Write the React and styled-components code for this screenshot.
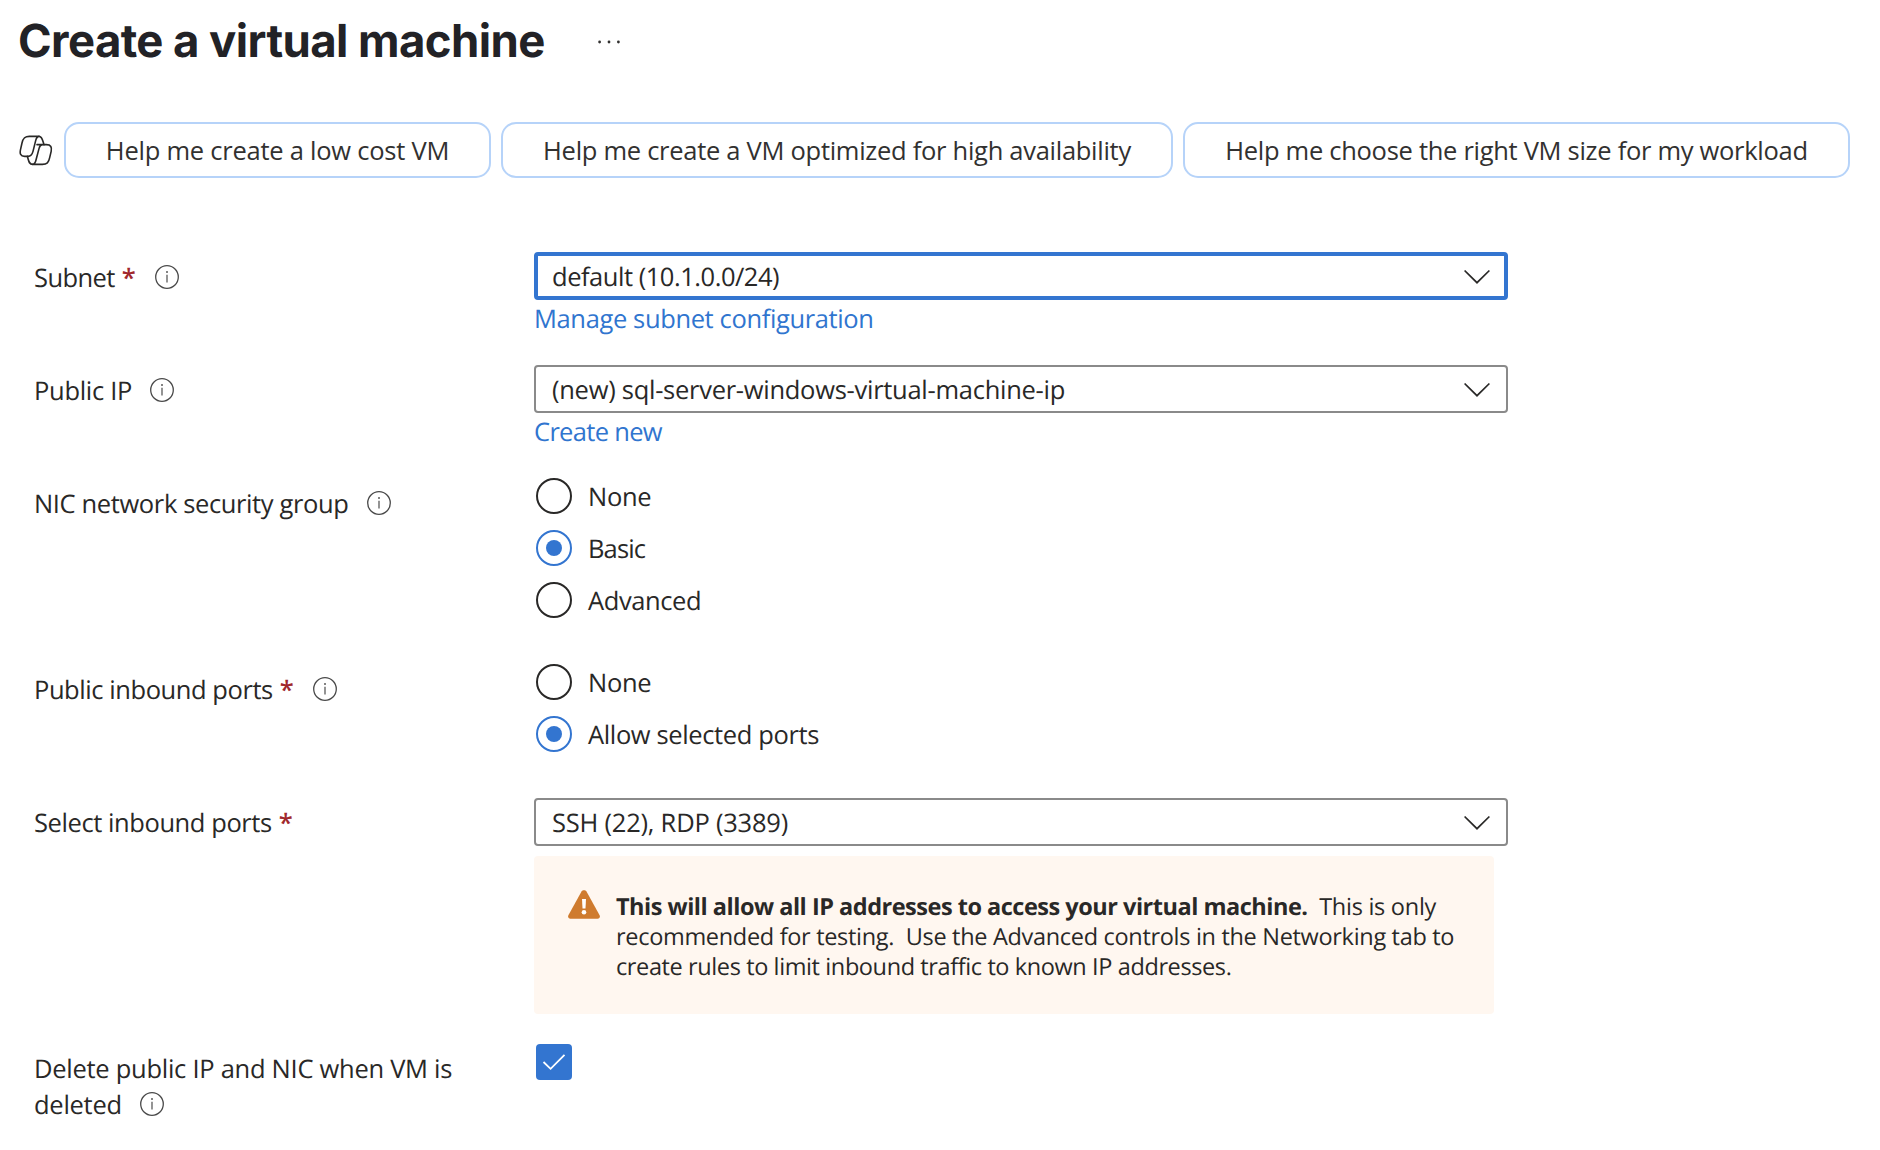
import React from 'react';
import styled, { createGlobalStyle } from 'styled-components';

const GlobalStyle = createGlobalStyle`
  *, *::before, *::after { box-sizing: border-box; }
  body {
    margin: 0;
    background: #fff;
    color: #292827;
    font-family: "Open Sans", "Noto Sans", sans-serif;
    font-size: 25.5px;
    line-height: 36px;
    text-rendering: geometricPrecision;
  }
`;

const Page = styled.main`
  width: 1880px;
  min-height: 1150px;
  padding-top: 10px;
  background: #fff;
`;

const Header = styled.header`
  display: flex;
  align-items: center;
  height: 62px;
  padding-left: 18px;
`;

const Title = styled.h1`
  margin: 0;
  width: 580px;
  font-family: Inter, sans-serif;
  font-size: 45.5px;
  font-weight: 700;
  line-height: 60px;
  letter-spacing: -0.58px;
  white-space: nowrap;
  color: #222226;
`;

const MoreButton = styled.button`
  display: flex;
  padding: 2px 0 0;
  border: 0;
  background: none;
`;

const Suggestions = styled.div`
  display: flex;
  align-items: center;
  height: 56px;
  margin-top: 50px;
  padding-left: 19px;
`;

const CopilotSvg = styled.svg`
  flex: none;
  margin-right: 11px;
`;

const ChipList = styled.div`
  display: flex;
  gap: 10px;
`;

const Chip = styled.button`
  width: ${(p) => p.$width}px;
  height: 56px;
  padding: 0;
  border: 2px solid #b6d3f9;
  border-radius: 15px;
  background: #fff;
  color: #323130;
  font: inherit;
  letter-spacing: ${(p) => p.$track}px;
  white-space: nowrap;
`;

const Form = styled.form`
  display: flex;
  flex-direction: column;
  margin-top: 74px;
  padding-left: 34px;
`;

const Row = styled.div`
  display: grid;
  grid-template-columns: 500px 974px;
  align-items: start;
  margin-bottom: ${(p) => p.$after}px;
`;

const Label = styled.div`
  width: 440px;
  padding-top: ${(p) => p.$top ?? 8}px;
`;

const Text = styled.span`
  letter-spacing: ${(p) => p.$track}px;
  white-space: ${(p) => (p.$wrap ? 'normal' : 'nowrap')};
`;

const Required = styled.span`
  margin: 0 1px 0 7px;
  color: #a0282c;
  font-weight: 600;
`;

const InfoSvg = styled.svg`
  margin-left: 18px;
  vertical-align: -2px;
`;

const Field = styled.div`
  display: flex;
  flex-direction: column;
  align-items: flex-start;
`;

const Select = styled.div`
  display: flex;
  align-items: center;
  justify-content: space-between;
  width: 974px;
  height: 48px;
  padding: 0 ${(p) => (p.$focused ? 14 : 16)}px;
  border: ${(p) => (p.$focused ? '4px solid #3375d0' : '2px solid #8a8a8a')};
  border-radius: 4px;
  background: #fff;

  > span { padding-top: 2px; }
`;

const Link = styled.a`
  padding-top: 1px;
  margin-bottom: -1px;
  color: #3075cf;
  letter-spacing: ${(p) => p.$track}px;
`;

const RadioGroup = styled.div`
  display: flex;
  flex-direction: column;
  gap: 16px;
  padding-left: 2px;
`;

const RadioOption = styled.label`
  display: flex;
  align-items: center;
  gap: 16px;
  height: 36px;

  > span:last-child { padding-top: 2px; }
`;

const RadioCircle = styled.span`
  display: flex;
  align-items: center;
  justify-content: center;
  width: 36px;
  height: 36px;
  border: 2px solid ${(p) => (p.$checked ? '#3375d0' : '#292827')};
  border-radius: 50%;

  &::after {
    content: "";
    width: 16px;
    height: 16px;
    border-radius: 50%;
    background: ${(p) => (p.$checked ? '#3375d0' : 'transparent')};
  }
`;

const Warning = styled.div`
  display: flex;
  gap: 16px;
  width: 960px;
  height: 158px;
  margin-top: 10px;
  padding: 34px 24px 0 34px;
  border-radius: 4px;
  background: #fff7f0;
`;

const WarningText = styled.p`
  margin: 1px 0 0;
  font-size: 23.5px;
  line-height: 30px;
  white-space: nowrap;
`;

const WarningLine = styled.span`
  display: block;
  letter-spacing: ${(p) => p.$track}px;
`;

const Strong = styled.strong`
  font-weight: 700;
  letter-spacing: -0.49px;
`;

const Checkbox = styled.span`
  display: flex;
  width: 36px;
  height: 36px;
  margin-left: 2px;
  border-radius: 4px;
  background: #3375d0;
`;

const CopilotIcon = () => (
  <CopilotSvg width="34" height="31" viewBox="28 43 102 93" fill="none" stroke="#292827" strokeWidth="4.8" strokeLinejoin="round" strokeLinecap="round">
    <path d="M59 47H88C82 47 80 52 78 60L70 92C67 103 64 107 55 107H45C32 107 30 98 32.5 87L37 67C40 53 45 47 59 47Z" />
    <path d="M88 47C98 47 99 60 103 72" />
    <path d="M82 72H110C124 72 127 80 124.5 92L120 111C117 126 112 131 98 131H69C75 131 77 126 79 118L88 84C90 76 93 72 100 72" />
    <path d="M53 107C57 119 57 131 69 131" />
  </CopilotSvg>
);

const Info = () => (
  <InfoSvg width="24" height="24" viewBox="0 0 24 24" fill="none">
    <circle cx="12" cy="12" r="11.3" stroke="#4a4a4a" strokeWidth="1.3" />
    <path d="M12 9.8V17.6" stroke="#5a5a5a" strokeWidth="1.3" />
    <circle cx="12" cy="7" r="1" fill="#5a5a5a" />
  </InfoSvg>
);

const Chevron = () => (
  <svg width="26" height="15" viewBox="0 0 26 15" fill="none">
    <path d="M0.6 1.5L13 13.7L25.4 1.5" stroke="#292827" strokeWidth="1.7" />
  </svg>
);

const WarningIcon = () => (
  <svg width="32" height="29" viewBox="0 0 32 29">
    <path
      d="M13.5 1.5C14.5 -0.3 17.5 -0.3 18.5 1.5L31.6 25.3C32.5 27 31.5 28.7 29.6 28.7H2.4C0.5 28.7 -0.5 27 0.4 25.3Z"
      fill="#cf7b2e"
    />
    <path d="M14 9H18L17.5 18.5H14.5Z" fill="#fff" />
    <circle cx="16" cy="22.2" r="2.3" fill="#fff" />
  </svg>
);

const Dropdown = ({ children, track, focused }) => (
  <Select $focused={focused}>
    <Text $track={track}>{children}</Text>
    <Chevron />
  </Select>
);

const Radios = ({ options }) => (
  <RadioGroup>
    {options.map(([name, track, checked]) => (
      <RadioOption key={name}>
        <RadioCircle $checked={checked} />
        <Text $track={track}>{name}</Text>
      </RadioOption>
    ))}
  </RadioGroup>
);

export default function App() {
  return (
    <Page>
      <GlobalStyle />
      <Header>
        <Title>Create a virtual machine</Title>
        <MoreButton type="button" aria-label="More">
          <svg width="22" height="4" viewBox="0 0 22 4" fill="#323130">
            <circle cx="1.6" cy="2" r="1.4" />
            <circle cx="11" cy="2" r="1.4" />
            <circle cx="20.4" cy="2" r="1.4" />
          </svg>
        </MoreButton>
      </Header>

      <Suggestions>
        <CopilotIcon />
        <ChipList>
          <Chip $width={427} $track={-0.24}>Help me create a low cost VM</Chip>
          <Chip $width={672} $track={-0.28}>Help me create a VM optimized for high availability</Chip>
          <Chip $width={667} $track={-0.29}>Help me choose the right VM size for my workload</Chip>
        </ChipList>
      </Suggestions>

      <Form>
        <Row $after={29}>
          <Label>
            <Text $track={-0.6}>Subnet</Text>
            <Required>*</Required>
            <Info />
          </Label>
          <Field>
            <Dropdown focused track={-0.47}>default (10.1.0.0/24)</Dropdown>
            <Link $track={-0.37}>Manage subnet configuration</Link>
          </Field>
        </Row>

        <Row $after={29}>
          <Label>
            <Text $track={-0.3}>Public IP</Text>
            <Info />
          </Label>
          <Field>
            <Dropdown track={-0.27}>(new) sql-server-windows-virtual-machine-ip</Dropdown>
            <Link $track={-0.68}>Create new</Link>
          </Field>
        </Row>

        <Row $after={46}>
          <Label>
            <Text $track={-0.37}>NIC network security group</Text>
            <Info />
          </Label>
          <Radios options={[['None', -0.3, false], ['Basic', -0.85, true], ['Advanced', -0.4, false]]} />
        </Row>

        <Row $after={46}>
          <Label>
            <Text $track={-0.43}>Public inbound ports</Text>
            <Required>*</Required>
            <Info />
          </Label>
          <Radios options={[['None', -0.3, false], ['Allow selected ports', -0.37, true]]} />
        </Row>

        <Row $after={30}>
          <Label $top={7}>
            <Text $track={-0.42}>Select inbound ports</Text>
            <Required>*</Required>
          </Label>
          <Field>
            <Dropdown track={-0.22}>SSH (22), RDP (3389)</Dropdown>
            <Warning>
              <WarningIcon />
              <WarningText>
                <WarningLine $track={-0.27}>
                  <Strong>This will allow all IP addresses to access your virtual machine.</Strong>
                  {'\u00a0 This is only'}
                </WarningLine>
                <WarningLine $track={-0.31}>
                  {'recommended for testing.\u00a0 Use the Advanced controls in the Networking tab to'}
                </WarningLine>
                <WarningLine $track={-0.39}>
                  create rules to limit inbound traffic to known IP addresses.
                </WarningLine>
              </WarningText>
            </Warning>
          </Field>
        </Row>

        <Row $after={0}>
          <Label $top={7}>
            <Text $wrap $track={-0.27}>Delete public IP and NIC when VM is deleted</Text>
            <Info />
          </Label>
          <Checkbox>
            <svg width="36" height="36" viewBox="0 0 36 36" fill="none">
              <path d="M7.5 18L14.6 24.8L28.5 10.8" stroke="#fff" strokeWidth="1.8" />
            </svg>
          </Checkbox>
        </Row>
      </Form>
    </Page>
  );
}
